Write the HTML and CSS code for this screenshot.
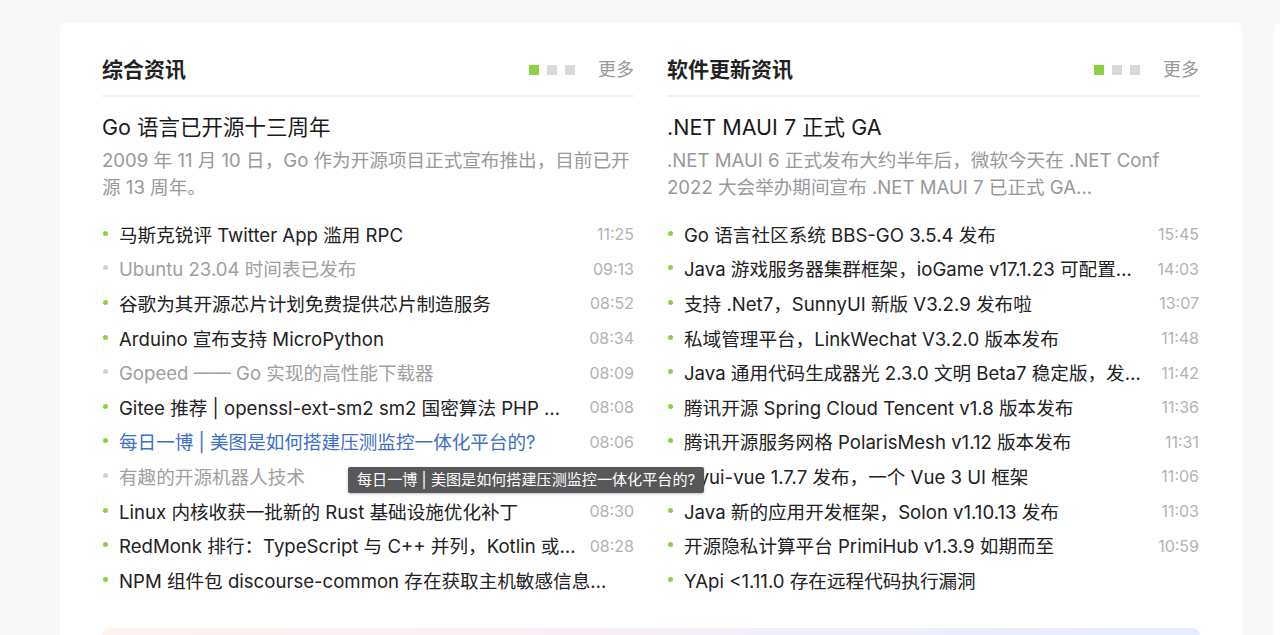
FILE: index.html
```html
<!DOCTYPE html>
<html>
<head>
  <meta charset="utf-8">
  <link rel="stylesheet" href="styles.css">
</head>
<body>
  <div class="page">
    <div class="news-card">
      <div class="news-columns">

        <section class="news-block">
          <div class="block-header">
            <h2>综合资讯</h2>
            <div class="block-tools">
              <span class="pager"><i class="active"></i><i></i><i></i></span>
              <a href="#" class="more">更多</a>
            </div>
          </div>
          <div class="headline">
            <h3>Go 语言已开源十三周年</h3>
            <p>2009 年 11 月 10 日，Go 作为开源项目正式宣布推出，目前已开源 13 周年。</p>
          </div>
          <ul class="news-list">
            <li><span class="dot"></span><a href="#" class="title">马斯克锐评 Twitter App 滥用 RPC</a><span class="time">11:25</span></li>
            <li class="visited"><span class="dot"></span><a href="#" class="title">Ubuntu 23.04 时间表已发布</a><span class="time">09:13</span></li>
            <li><span class="dot"></span><a href="#" class="title">谷歌为其开源芯片计划免费提供芯片制造服务</a><span class="time">08:52</span></li>
            <li><span class="dot"></span><a href="#" class="title">Arduino 宣布支持 MicroPython</a><span class="time">08:34</span></li>
            <li class="visited"><span class="dot"></span><a href="#" class="title">Gopeed —— Go 实现的高性能下载器</a><span class="time">08:09</span></li>
            <li><span class="dot"></span><a href="#" class="title">Gitee 推荐 | openssl-ext-sm2 sm2 国密算法 PHP 扩展</a><span class="time">08:08</span></li>
            <li class="hover"><span class="dot"></span><a href="#" class="title">每日一博 | 美图是如何搭建压测监控一体化平台的?</a><span class="time">08:06</span>
              <div class="tooltip">每日一博 | 美图是如何搭建压测监控一体化平台的?</div>
            </li>
            <li class="visited"><span class="dot"></span><a href="#" class="title">有趣的开源机器人技术</a><span class="time">08:31</span></li>
            <li><span class="dot"></span><a href="#" class="title">Linux 内核收获一批新的 Rust 基础设施优化补丁</a><span class="time">08:30</span></li>
            <li><span class="dot"></span><a href="#" class="title">RedMonk 排行：TypeScript 与 C++ 并列，Kotlin 或将跌出前二十</a><span class="time">08:28</span></li>
            <li><span class="dot"></span><a href="#" class="title">NPM 组件包 discourse-common 存在获取主机敏感信息漏洞</a><span class="time"></span></li>
          </ul>
        </section>

        <section class="news-block">
          <div class="block-header">
            <h2>软件更新资讯</h2>
            <div class="block-tools">
              <span class="pager"><i class="active"></i><i></i><i></i></span>
              <a href="#" class="more">更多</a>
            </div>
          </div>
          <div class="headline">
            <h3>.NET MAUI 7 正式 GA</h3>
            <p>.NET MAUI 6 正式发布大约半年后，微软今天在 .NET Conf 2022 大会举办期间宣布 .NET MAUI 7 已正式 GA...</p>
          </div>
          <ul class="news-list">
            <li><span class="dot"></span><a href="#" class="title">Go 语言社区系统 BBS-GO 3.5.4 发布</a><span class="time">15:45</span></li>
            <li><span class="dot"></span><a href="#" class="title">Java 游戏服务器集群框架，ioGame v17.1.23 可配置化的业务框架</a><span class="time">14:03</span></li>
            <li><span class="dot"></span><a href="#" class="title">支持 .Net7，SunnyUI 新版 V3.2.9 发布啦</a><span class="time">13:07</span></li>
            <li><span class="dot"></span><a href="#" class="title">私域管理平台，LinkWechat V3.2.0 版本发布</a><span class="time">11:48</span></li>
            <li><span class="dot"></span><a href="#" class="title">Java 通用代码生成器光 2.3.0 文明 Beta7 稳定版，发布 Vue 前端</a><span class="time">11:42</span></li>
            <li><span class="dot"></span><a href="#" class="title">腾讯开源 Spring Cloud Tencent v1.8 版本发布</a><span class="time">11:36</span></li>
            <li><span class="dot"></span><a href="#" class="title">腾讯开源服务网格 PolarisMesh v1.12 版本发布</a><span class="time">11:31</span></li>
            <li><span class="dot"></span><a href="#" class="title">layui-vue 1.7.7 发布，一个 Vue 3 UI 框架</a><span class="time">11:06</span></li>
            <li><span class="dot"></span><a href="#" class="title">Java 新的应用开发框架，Solon v1.10.13 发布</a><span class="time">11:03</span></li>
            <li><span class="dot"></span><a href="#" class="title">开源隐私计算平台 PrimiHub v1.3.9 如期而至</a><span class="time">10:59</span></li>
            <li><span class="dot"></span><a href="#" class="title">YApi &lt;1.11.0 存在远程代码执行漏洞</a><span class="time"></span></li>
          </ul>
        </section>

      </div>
      <div class="promo-strip"></div>
    </div>
    <div class="side-card"></div>
  </div>
</body>
</html>
```

FILE: styles.css
```css
* {
  margin: 0;
  padding: 0;
  box-sizing: border-box;
}

body {
  background: #f6f7f9;
  font-family: Inter, "Noto Sans CJK SC", sans-serif;
  color: #222;
  overflow: hidden;
}

a {
  color: inherit;
  text-decoration: none;
}

.page {
  display: flex;
  gap: 32px;
  padding: 23px 0 0 60px;
}

.news-card {
  flex: 0 0 1182px;
  background: #fff;
  border-radius: 6px;
  padding: 34px 42px 0;
}

.side-card {
  flex: 0 0 300px;
  background: #fff;
  border-radius: 6px;
  height: 700px;
}

.news-columns {
  display: grid;
  grid-template-columns: 532px 532px;
  gap: 33px;
}

/* header */
.block-header {
  display: flex;
  justify-content: space-between;
  align-items: center;
  line-height: 26px;
  padding-bottom: 12px;
  border-bottom: 2px solid #f0f0f0;
}

.block-header h2 {
  font-size: 21px;
  font-weight: 600;
  color: #222;
}

.block-tools {
  display: flex;
  align-items: center;
  gap: 23px;
}

.pager {
  display: flex;
  gap: 8px;
}

.pager i {
  width: 10px;
  height: 10px;
  background: #d9d9d9;
}

.pager i.active {
  background: #8dcf45;
}

.more {
  font-size: 18px;
  color: #999;
}

/* headline */
.headline {
  padding-top: 15px;
}

.headline h3 {
  font-size: 21.5px;
  font-weight: normal;
  line-height: 30px;
  color: #1a1a1a;
}

.headline p {
  margin-top: 5px;
  font-size: 18.6px;
  line-height: 27px;
  color: #999;
  display: -webkit-box;
  -webkit-line-clamp: 2;
  -webkit-box-orient: vertical;
  overflow: hidden;
}

/* list */
.news-list {
  list-style: none;
  margin-top: 15px;
}

.news-list li {
  display: flex;
  align-items: center;
  height: 34.6px;
  font-size: 18.6px;
  position: relative;
}

.news-list .dot {
  flex: none;
  width: 5px;
  height: 5px;
  border-radius: 50%;
  background: #8dcf45;
  margin: 0 11px 0 1px;
}

.news-list .title {
  flex: 1;
  min-width: 0;
  white-space: nowrap;
  overflow: hidden;
  text-overflow: ellipsis;
  color: #222;
}

.news-list .time {
  flex: none;
  margin-left: 12px;
  padding-top: 2px;
  font-size: 16px;
  color: #b3b3b3;
}

.news-list li.visited .title {
  color: #a0a0a0;
}

.news-list li.visited .dot {
  background: #d4d4d4;
}

.news-list li.hover .title {
  color: #3d6fc7;
}

.tooltip {
  position: absolute;
  top: 43px;
  left: 246px;
  z-index: 10;
  white-space: nowrap;
  background: #58585a;
  color: #fff;
  font-size: 15.1px;
  line-height: 26px;
  padding: 0 9px;
  border-radius: 2px;
  box-shadow: 0 1px 3px rgba(0, 0, 0, 0.25);
}

.promo-strip {
  margin-top: 31px;
  height: 40px;
  border-radius: 8px;
  background: linear-gradient(90deg, #fdf3ef, #fbeef6 40%, #eeeefa 70%, #e5effd);
}
```
